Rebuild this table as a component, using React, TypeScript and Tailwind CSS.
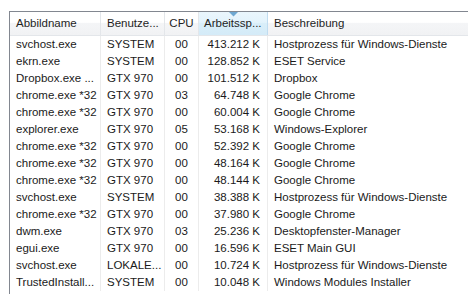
import React from 'react';

type Proc = {
  name: string;
  user: string;
  cpu: string;
  mem: string;
  desc: string;
};

const rows: Proc[] = [
  { name: 'svchost.exe', user: 'SYSTEM', cpu: '00', mem: '413.212 K', desc: 'Hostprozess für Windows-Dienste' },
  { name: 'ekrn.exe', user: 'SYSTEM', cpu: '00', mem: '128.852 K', desc: 'ESET Service' },
  { name: 'Dropbox.exe ...', user: 'GTX 970', cpu: '00', mem: '101.512 K', desc: 'Dropbox' },
  { name: 'chrome.exe *32', user: 'GTX 970', cpu: '03', mem: '64.748 K', desc: 'Google Chrome' },
  { name: 'chrome.exe *32', user: 'GTX 970', cpu: '00', mem: '60.004 K', desc: 'Google Chrome' },
  { name: 'explorer.exe', user: 'GTX 970', cpu: '05', mem: '53.168 K', desc: 'Windows-Explorer' },
  { name: 'chrome.exe *32', user: 'GTX 970', cpu: '00', mem: '52.392 K', desc: 'Google Chrome' },
  { name: 'chrome.exe *32', user: 'GTX 970', cpu: '00', mem: '48.164 K', desc: 'Google Chrome' },
  { name: 'chrome.exe *32', user: 'GTX 970', cpu: '00', mem: '48.144 K', desc: 'Google Chrome' },
  { name: 'svchost.exe', user: 'SYSTEM', cpu: '00', mem: '38.388 K', desc: 'Hostprozess für Windows-Dienste' },
  { name: 'chrome.exe *32', user: 'GTX 970', cpu: '00', mem: '37.980 K', desc: 'Google Chrome' },
  { name: 'dwm.exe', user: 'GTX 970', cpu: '03', mem: '25.236 K', desc: 'Desktopfenster-Manager' },
  { name: 'egui.exe', user: 'GTX 970', cpu: '00', mem: '16.596 K', desc: 'ESET Main GUI' },
  { name: 'svchost.exe', user: 'LOKALE...', cpu: '00', mem: '10.724 K', desc: 'Hostprozess für Windows-Dienste' },
  { name: 'TrustedInstall...', user: 'SYSTEM', cpu: '00', mem: '10.048 K', desc: 'Windows Modules Installer' },
];

export default function App() {
  return (
    <div
      className="w-[468px] h-[294px] overflow-hidden bg-white pl-[9px] pt-[11px] text-[11.5px] text-[#1a1a1a]"
      style={{ fontFamily: '"Liberation Sans", Arial, sans-serif' }}
    >
      <div className="h-full border-l border-t border-[#828790] bg-white">
        {/* header */}
        <div className="flex h-[24px] bg-[linear-gradient(#ffffff_0%,#ffffff_45%,#f4f5f7_50%,#f1f2f4_100%)] border-b border-[#e3e6ea] text-[#1e1e1e]">
          <div className="w-[91px] shrink-0 flex items-center pl-[6px] border-r border-[#e3e6ea]">Abbildname</div>
          <div className="w-[64px] shrink-0 flex items-center pl-[6px] border-r border-[#e3e6ea]">Benutze...</div>
          <div className="w-[34px] shrink-0 flex items-center justify-center border-r border-[#e3e6ea]">CPU</div>
          <div className="relative w-[69px] shrink-0 flex items-center pl-[5px] border-r border-[#c0dcf0] bg-[linear-gradient(#eaf6fd_0%,#e3f3fc_45%,#d9eef9_50%,#d4ebf8_100%)]">
            <svg className="absolute left-[30px] top-0" width="9" height="5" viewBox="0 0 9 5">
              <path d="M0 0 H9 L4.5 4.5 Z" fill="#6fa8d2" />
            </svg>
            Arbeitssp...
          </div>
          <div className="flex-1 flex items-center pl-[6px]">Beschreibung</div>
        </div>
        {/* rows */}
        {rows.map((r, i) => (
          <div key={i} className="flex h-[17px]">
            <div className="w-[91px] shrink-0 flex items-center pl-[6px] border-r border-[#ececec] whitespace-nowrap overflow-hidden">{r.name}</div>
            <div className="w-[64px] shrink-0 flex items-center pl-[6px] border-r border-[#ececec] whitespace-nowrap">{r.user}</div>
            <div className="w-[34px] shrink-0 flex items-center justify-center border-r border-[#ececec]">{r.cpu}</div>
            <div className="w-[69px] shrink-0 flex items-center justify-end pr-[7px] border-r border-[#ececec] whitespace-nowrap">{r.mem}</div>
            <div className="flex-1 flex items-center pl-[6px] whitespace-nowrap">{r.desc}</div>
          </div>
        ))}
      </div>
    </div>
  );
}
